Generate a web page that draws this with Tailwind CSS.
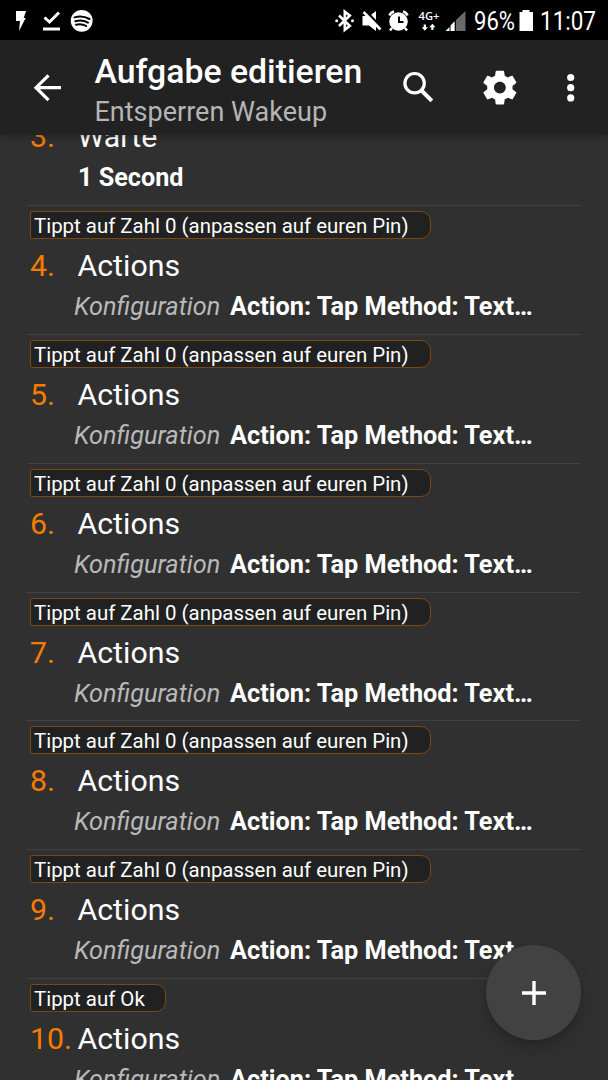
<!DOCTYPE html>
<html lang="de">
<head>
<meta charset="utf-8">
<title>Aufgabe editieren</title>
<script src="https://cdn.jsdelivr.net/npm/@tailwindcss/browser@4"></script>
</head>
<body class="w-[608px] h-[1080px] overflow-hidden bg-[#303030] text-white font-['Roboto',sans-serif]">
<div class="relative flex flex-col w-[608px] h-[1080px] overflow-hidden">
  <div class="h-[40px] shrink-0 bg-black flex items-center relative z-10">
    <svg class="w-[608px] h-[40px]" viewBox="0 0 608 40" fill="#fff">
      <path d="M16 11h10l-2.300 7h2L19 31l1-10h-4z"/>
      <path d="M44.500 17.500l5 4.500 9.500-9.500" fill="none" stroke="#fff" stroke-width="3"/><path d="M43 27.500h17v3H43z"/>
      <circle cx="81.700" cy="20.800" r="10.900"/>
      <path d="M74.500 17.400q8-2.200 15 1.600M75.300 21.200q7-1.800 12.700 1.400M76 24.800q5.500-1.500 10.200 1.200" fill="none" stroke="#000" stroke-width="2" stroke-linecap="round"/>
      <path d="M339 15.500l10.800 10.300-5 4V11.700l5 4-10.800 10.300" fill="none" stroke="#fff" stroke-width="2.600"/>
      <circle cx="336.700" cy="20.800" r="1.500"/><circle cx="352.500" cy="20.800" r="1.500"/>
      <path d="M362.500 16h4.500l9 9v6l-7-5.500h-6.500zM369.500 16l6.500-5v11.500z"/>
      <path d="M366 11l16 17" stroke="#000" stroke-width="2.500"/><path d="M363.500 12l17 17.500" stroke="#fff" stroke-width="2.600"/>
      <circle cx="398.500" cy="21.500" r="9.300"/><path d="M389.500 15.500q1-3 4.500-4M407.500 15.500q-1-3-4.500-4" stroke="#fff" stroke-width="2.500" fill="none"/><path d="M392 28l-2 2.500M405 28l2 2.500" stroke="#fff" stroke-width="2.500"/>
      <path d="M399 16.500v5.500h4.500" stroke="#000" stroke-width="2" fill="none"/>
      <text x="418.500" y="20" class="text-[10px] font-semibold font-['Open_Sans',sans-serif]" textLength="21" lengthAdjust="spacingAndGlyphs">4G+</text>
      <path d="M423.700 24.500h2.200v2.700h2l-3.100 3.500-3.100-3.500h2zM431.300 30h2.200v-2.700h2l-3.100-3.500-3.100 3.500h2z"/>
      <path d="M456 20L465.500 11v20H456z" fill="#6a6a6a"/><path d="M445.500 31l4-4V31zM450.500 25.500l4.200-4.200V31h-4.200z"/>
      <text x="474" y="30.300" class="text-[25px]" textLength="41" lengthAdjust="spacingAndGlyphs">96%</text>
      <path d="M522.500 10h7v2h3.500v19h-13.500V12h3z"/>
      <text x="540" y="30.300" class="text-[25px]" textLength="56" lengthAdjust="spacingAndGlyphs">11:07</text>
    </svg>
  </div>
  <header class="h-[95px] shrink-0 bg-[#222222] flex relative z-10 shadow-[0_2px_6px_rgba(0,0,0,0.25)]">
    <svg class="w-[94.500px] h-[95px] shrink-0" viewBox="0 40 94.500 95" fill="none" stroke="#fff" stroke-width="3.200"><path d="M61 87.700H36M48.500 75.300L36 87.700l12.500 12.500"/></svg>
    <div class="flex flex-col w-[293.500px] pt-[12px] whitespace-nowrap">
      <div class="h-[40px] leading-[40px] text-[33.800px] font-medium"><span>Aufgabe editieren</span></div>
      <div class="h-[38px] leading-[40px] text-[27.020px] text-[#b5b5b5]"><span>Entsperren Wakeup</span></div>
    </div>
    <svg class="w-[220px] h-[95px] shrink-0" viewBox="388 40 220 95" fill="#fff">
      <circle cx="414.600" cy="83.200" r="9.700" fill="none" stroke="#fff" stroke-width="3.200"/><path d="M421.500 90.500l10.300 10.300" stroke="#fff" stroke-width="4"/>
      <g transform="translate(479.600 67.300) scale(1.690)"><path d="M19.430 12.980c.04-.32.070-.64.070-.98s-.03-.66-.07-.98l2.110-1.650c.19-.15.240-.42.120-.64l-2-3.460c-.12-.22-.39-.3-.61-.22l-2.490 1c-.52-.4-1.080-.73-1.690-.98l-.38-2.650C14.460 2.180 14.250 2 14 2h-4c-.25 0-.46.180-.49.420l-.38 2.650c-.61.250-1.170.590-1.690.980l-2.490-1c-.23-.09-.49 0-.61.220l-2 3.460c-.13.220-.07.490.12.640l2.110 1.650c-.04.320-.07.650-.07.980s.03.660.07.980l-2.110 1.650c-.19.150-.24.420-.12.640l2 3.460c.12.220.39.300.61.220l2.490-1c.52.400 1.080.730 1.690.980l.38 2.650c.03.240.240.420.490.420h4c.25 0 .46-.18.490-.42l.38-2.650c.61-.25 1.170-.59 1.690-.98l2.490 1c.23.090.490 0 .61-.22l2-3.460c.12-.22.070-.49-.12-.64l-2.110-1.650zM12 15.500c-1.930 0-3.500-1.570-3.500-3.500s1.570-3.500 3.500-3.500 3.500 1.570 3.500 3.500-1.570 3.500-3.500 3.500z"/></g>
      <circle cx="570.700" cy="77.500" r="3.600"/><circle cx="570.700" cy="87.700" r="3.600"/><circle cx="570.700" cy="97.900" r="3.600"/>
    </svg>
  </header>
  <main class="flex flex-col -mt-[17px] pl-[27px] whitespace-nowrap">
    <section class="h-[87.150px] shrink-0">
      <div class="flex h-[36px] leading-[38px] text-[30.250px]"><span class="w-[50.500px] pl-[3px] text-[#f57c00]">3.</span><span>Warte</span></div>
      <div class="mt-[9px] ml-[51px] h-[30px] leading-[30px] text-[25.200px] font-bold">1 Second</div>
    </section>
    <div id="rows" class="flex flex-col"></div>
  </main>
  <button class="absolute left-[486px] top-[945px] size-[95px] rounded-full bg-[#424242] flex items-center justify-center shadow-[0_9px_14px_rgba(0,0,0,0.16),0_2px_4px_rgba(0,0,0,0.1)]">
    <svg class="size-[24px]" viewBox="0 0 24 24" stroke="#fff" stroke-width="3.400"><path d="M12 0v24M0 12h24"/></svg>
  </button>
</div>
<template id="row">
  <section class="h-[128.830px] shrink-0 w-[554px] border-t border-[#424242] pt-[5px]">
    <div class="label ml-[3px] h-[28px] border border-[#7d4712] bg-[#212121] rounded-l-[2px] rounded-r-[10px] pl-[3px] leading-[28px] text-[20.430px]"></div>
    <div class="flex mt-[9px] h-[36px] leading-[36px] text-[30.300px]"><span class="num w-[50.500px] pl-[3px] text-[#f57c00] shrink-0"></span><span class="act">Actions</span></div>
    <div class="flex mt-[8px] ml-[47px] h-[30px] leading-[30px] text-[25.300px]"><span class="kon w-[156px] shrink-0 italic text-[#b9b9b9]">Konfiguration</span><span class="cfg font-bold">Action: Tap Method: Text…</span></div>
  </section>
</template>
<script>
for (let n = 4; n <= 10; n++) {
  const r = document.getElementById('row').content.cloneNode(true);
  const label = r.querySelector('.label');
  label.textContent = n < 10 ? 'Tippt auf Zahl 0 (anpassen auf euren Pin)' : 'Tippt auf Ok';
  label.style.width = (n < 10 ? 401 : 136) + 'px';
  r.querySelector('.num').textContent = n + '.';
  document.getElementById('rows').appendChild(r);
}
</script>
</body>
</html>
